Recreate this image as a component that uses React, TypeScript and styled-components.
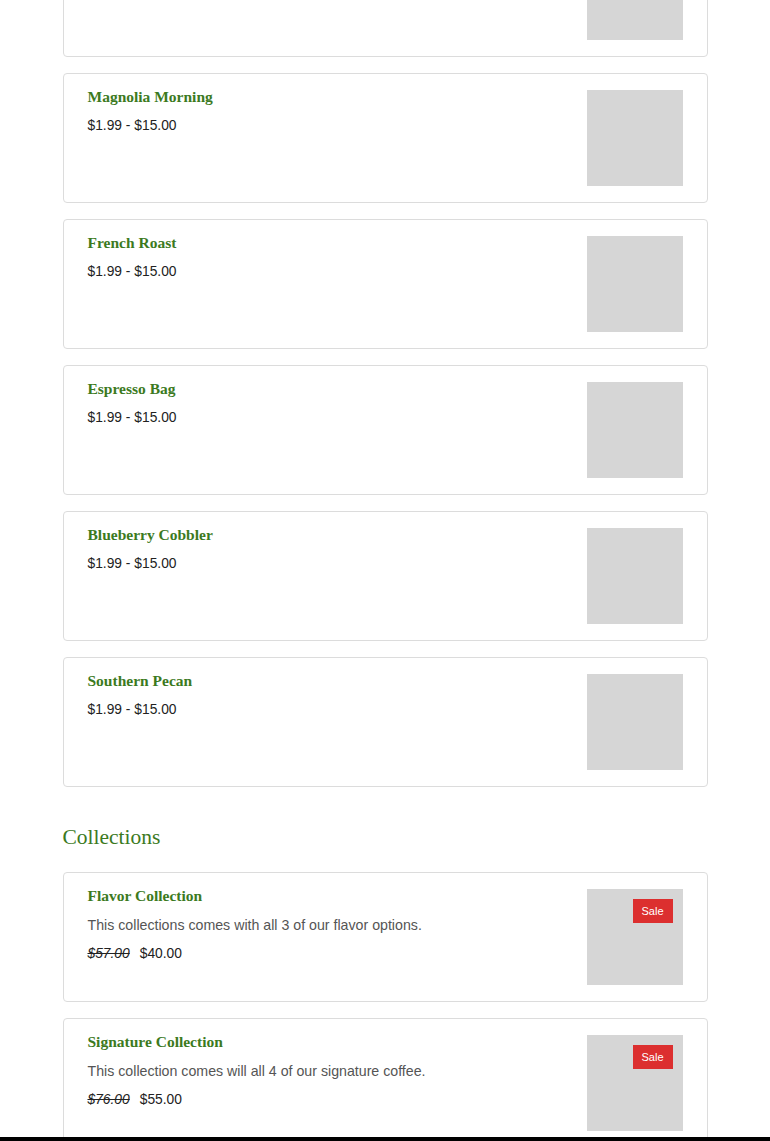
import React from 'react';
import styled, {createGlobalStyle} from 'styled-components';

const GlobalStyle = createGlobalStyle`
  html, body {
    margin: 0;
    padding: 0;
    background: #fff;
    overflow: hidden;
  }
`;

const Page = styled.div`
  width: 645px;
  margin: -73px auto 0;
`;

const CardList = styled.div`
  display: flex;
  flex-direction: column;
  gap: 16px;
`;

const Card = styled.div`
  display: flex;
  justify-content: space-between;
  align-items: flex-start;
  border: 1px solid #dcdcdc;
  border-radius: 4px;
  padding: 16px 24px;
  background: #fff;
`;

const Info = styled.div`
  display: flex;
  flex-direction: column;
  gap: 9px;
  margin-top: -3px;
`;

const Title = styled.div`
  font-family: "Liberation Serif", "DejaVu Serif", serif;
  font-weight: bold;
  font-size: 15.5px;
  line-height: 20px;
  color: #3c7a1e;
`;

const Description = styled.div`
  font-family: "Liberation Sans", Arial, sans-serif;
  font-size: 14.2px;
  line-height: 20px;
  color: #555;
`;

const Price = styled.div`
  font-family: "Liberation Sans", Arial, sans-serif;
  font-size: 13.8px;
  line-height: 20px;
  color: #222;
`;

const OldPrice = styled.span`
  font-style: italic;
  text-decoration: line-through;
  margin-right: 10px;
`;

const Thumb = styled.div`
  position: relative;
  flex: 0 0 96px;
  width: 96px;
  height: 96px;
  background: #d6d6d6;
`;

const SaleBadge = styled.span`
  position: absolute;
  top: 10px;
  right: 10px;
  width: 40px;
  height: 24px;
  display: flex;
  align-items: center;
  justify-content: center;
  background: #dc2f2f;
  color: #fff;
  font-family: "Liberation Sans", Arial, sans-serif;
  font-size: 11px;
`;

const SectionHeading = styled.h2`
  margin: 38px 0 23px;
  font-family: "Liberation Serif", "DejaVu Serif", serif;
  font-weight: normal;
  font-size: 21.5px;
  line-height: 24px;
  color: #3c7a1e;
`;

const BottomBar = styled.div`
  position: fixed;
  left: 0;
  right: 0;
  bottom: 0;
  height: 4px;
  background: #000;
`;

const products = [
  'Top Seller',
  'Magnolia Morning',
  'French Roast',
  'Espresso Bag',
  'Blueberry Cobbler',
  'Southern Pecan',
];

const collections = [
  {name: 'Flavor Collection', text: 'This collections comes with all 3 of our flavor options.', was: '$57.00', now: '$40.00'},
  {name: 'Signature Collection', text: 'This collection comes will all 4 of our signature coffee.', was: '$76.00', now: '$55.00'},
];

function App() {
  return (
    <>
      <GlobalStyle/>
      <Page>
        <CardList>
          {products.map((name) => (
            <Card key={name}>
              <Info>
                <Title>{name}</Title>
                <Price>$1.99 - $15.00</Price>
              </Info>
              <Thumb/>
            </Card>
          ))}
        </CardList>
        <SectionHeading>Collections</SectionHeading>
        <CardList>
          {collections.map((c) => (
            <Card key={c.name}>
              <Info>
                <Title>{c.name}</Title>
                <Description>{c.text}</Description>
                <Price>
                  <OldPrice>{c.was}</OldPrice>
                  {c.now}
                </Price>
              </Info>
              <Thumb>
                <SaleBadge>Sale</SaleBadge>
              </Thumb>
            </Card>
          ))}
        </CardList>
      </Page>
      <BottomBar/>
    </>
  );
}

export default App;
